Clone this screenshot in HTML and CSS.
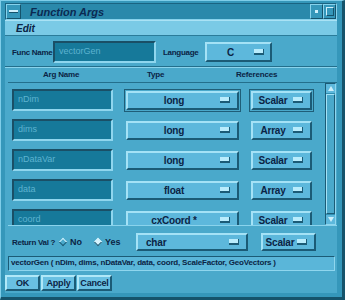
FILE: index.html
```html
<!DOCTYPE html>
<html lang="en">
<head>
    <meta charset="UTF-8">
    <title>Function Args</title>
    <link rel="stylesheet" href="styles.css">
</head>
<body>
    <div class="window">
        <div class="titlebar">
            <div class="tb-btn menu-btn"><span class="dash"></span></div>
            <div class="title">Function Args</div>
            <div class="tb-btn"><span class="dot"></span></div>
            <div class="tb-btn"><span class="square"></span></div>
        </div>
        <div class="menubar"><span class="menu-item">Edit</span></div>
        <div class="dialog">
            <div class="func-row">
                <span class="label func-label">Func Name</span>
                <div class="field func-field">vectorGen</div>
                <span class="label lang-label">Language</span>
                <div class="opt lang-opt"><span class="opt-text">C</span><span class="ind"></span></div>
            </div>
            <div class="sep"></div>
            <div class="headers">
                <span class="h-arg">Arg Name</span>
                <span class="h-type">Type</span>
                <span class="h-ref">References</span>
            </div>
            <div class="list">
                <div class="rows">
                    <div class="row focus">
                        <div class="field arg">nDim</div>
                        <div class="opt type"><span class="opt-text">long</span><span class="ind"></span></div>
                        <div class="opt ref"><span class="opt-text">Scalar</span><span class="ind"></span></div>
                    </div>
                    <div class="row">
                        <div class="field arg">dims</div>
                        <div class="opt type"><span class="opt-text">long</span><span class="ind"></span></div>
                        <div class="opt ref"><span class="opt-text">Array</span><span class="ind"></span></div>
                    </div>
                    <div class="row">
                        <div class="field arg">nDataVar</div>
                        <div class="opt type"><span class="opt-text">long</span><span class="ind"></span></div>
                        <div class="opt ref"><span class="opt-text">Scalar</span><span class="ind"></span></div>
                    </div>
                    <div class="row">
                        <div class="field arg">data</div>
                        <div class="opt type"><span class="opt-text">float</span><span class="ind"></span></div>
                        <div class="opt ref"><span class="opt-text">Array</span><span class="ind"></span></div>
                    </div>
                    <div class="row">
                        <div class="field arg">coord</div>
                        <div class="opt type"><span class="opt-text">cxCoord *</span><span class="ind"></span></div>
                        <div class="opt ref"><span class="opt-text">Scalar</span><span class="ind"></span></div>
                    </div>
                </div>
                <div class="scrollbar">
                    <div class="arrow up"></div>
                    <div class="slider"></div>
                    <div class="arrow down"></div>
                </div>
            </div>
            <div class="return-row">
                <span class="label ret-label">Return Val ?</span>
                <span class="radio"><span class="diamond"></span>No</span>
                <span class="radio"><span class="diamond on"></span>Yes</span>
                <div class="opt ret-type"><span class="opt-text left">char</span><span class="ind"></span></div>
                <div class="opt ret-ref"><span class="opt-text">Scalar</span><span class="ind"></span></div>
            </div>
            <div class="status">vectorGen ( nDim, dims, nDataVar, data, coord, ScaleFactor, GeoVectors )</div>
            <div class="actions">
                <div class="btn">OK</div>
                <div class="btn">Apply</div>
                <div class="btn">Cancel</div>
            </div>
        </div>
    </div>
</body>
</html>
```

FILE: styles.css
```css
* {
    box-sizing: border-box;
}

body {
    margin: 0;
    background-color: #1d6f8c;
    font-family: 'Liberation Sans', Arial, sans-serif;
    color: #0b2445;
}

.window {
    width: 345px;
    height: 300px;
    display: flex;
    flex-direction: column;
    background-color: #3597ba;
    border-top: 1px solid #7fcde8;
    border-left: 1px solid #7fcde8;
    border-right: 3px solid #15536b;
    border-bottom: 3px solid #15536b;
    padding: 2px 5px 4px 4px;
}

.titlebar {
    height: 17px;
    display: flex;
    align-items: center;
    background-color: #2a89ab;
    border: 1px solid #1a6482;
    border-right-color: #86d2ec;
    border-bottom-color: #86d2ec;
}

.tb-btn {
    width: 13px;
    height: 15px;
    display: flex;
    align-items: center;
    justify-content: center;
    background-color: #3597ba;
    border: 1px solid #86d2ec;
    border-right-color: #15536b;
    border-bottom-color: #15536b;
}

.menu-btn {
    width: 15px;
}

.dash {
    width: 9px;
    height: 3px;
    background-color: #cdeffb;
    border-bottom: 1px solid #15536b;
}

.dot {
    width: 3px;
    height: 3px;
    background-color: #cdeffb;
}

.square {
    width: 8px;
    height: 9px;
    border: 1px solid #cdeffb;
    border-right-color: #15536b;
    border-bottom-color: #15536b;
}

.title {
    flex: 1;
    padding-left: 9px;
    font-size: 11px;
    font-weight: bold;
    font-style: italic;
    color: #0a2a52;
}

.menubar {
    height: 16px;
    display: flex;
    align-items: center;
    background-color: #7acae6;
    border-top: 1px solid #a9e2f5;
    border-bottom: 1px solid #2b7c9a;
    padding-left: 11px;
}

.menu-item {
    font-size: 10px;
    font-weight: bold;
    font-style: italic;
}

.dialog {
    flex: 1;
    display: flex;
    flex-direction: column;
    background-color: #4aa9cb;
    padding: 5px 0 2px 3px;
}

.label {
    font-size: 8px;
    font-weight: bold;
    letter-spacing: -0.3px;
    white-space: nowrap;
}

.func-row {
    height: 22px;
    display: flex;
    align-items: center;
    padding-left: 4px;
}

.func-label {
    width: 41px;
}

.field {
    height: 22px;
    background-color: #16799a;
    border: 2px solid #1a4f66;
    border-right-color: #8fd6ee;
    border-bottom-color: #8fd6ee;
    font-size: 9px;
    color: #5db3d0;
    padding: 3px 0 0 4px;
}

.func-field {
    width: 103px;
}

.lang-label {
    width: 49px;
    padding-left: 7px;
}

.opt {
    height: 19px;
    display: flex;
    align-items: center;
    background-color: #5db8dc;
    border: 2px solid #a4e2f6;
    border-right-color: #1b5b76;
    border-bottom-color: #1b5b76;
    font-size: 10px;
    font-weight: bold;
    letter-spacing: -0.2px;
    padding-right: 7px;
}

.opt-text {
    flex: 1;
    text-align: center;
}

.opt-text.left {
    text-align: left;
    padding-left: 8px;
}

.ind {
    width: 10px;
    height: 6px;
    background-color: #b9ecfc;
    border-bottom: 2px solid #1b5b76;
    border-right: 1px solid #1b5b76;
}

.lang-opt {
    width: 67px;
    height: 20px;
    padding-right: 6px;
}

.lang-opt .opt-text {
    text-align: left;
    padding-left: 20px;
}

.sep {
    margin-top: 3px;
    margin-left: -3px;
    border-top: 1px solid #236f8c;
    border-bottom: 1px solid #8ad3ec;
}

.headers {
    height: 12px;
    display: flex;
    align-items: center;
    font-size: 8px;
    font-weight: bold;
    letter-spacing: -0.2px;
}

.h-arg {
    margin-left: 35px;
    width: 104px;
}

.h-type {
    width: 89px;
}

.h-ref {
    width: 60px;
}

.list {
    height: 144px;
    margin-top: 2px;
    display: flex;
    border-top: 1px solid #236f8c;
    border-bottom: 1px solid #8ad3ec;
}

.rows {
    flex: 1;
    overflow: hidden;
    display: flex;
    flex-direction: column;
    gap: 8px;
    padding: 6px 0 0 4px;
}

.row {
    height: 22px;
    flex-shrink: 0;
    display: flex;
    align-items: center;
}

.arg {
    width: 101px;
}

.type {
    width: 113px;
    margin-left: 13px;
}

.ref {
    width: 61px;
    margin-left: 12px;
}

.focus .type,
.focus .ref {
    outline: 1px solid #1f5e78;
    outline-offset: 1px;
}

.scrollbar {
    width: 11px;
    margin: 0 1px 0 4px;
    display: flex;
    flex-direction: column;
    background-color: #2f8fb2;
    border: 1px solid #1b5b76;
    border-right-color: #8fd6ee;
    border-bottom-color: #8fd6ee;
}

.arrow {
    height: 9px;
    background-color: #5db8dc;
    position: relative;
}

.arrow::after {
    content: '';
    position: absolute;
    left: 2px;
    width: 0;
    height: 0;
    border-left: 3px solid transparent;
    border-right: 3px solid transparent;
}

.arrow.up::after {
    top: 2px;
    border-bottom: 5px solid #cdeffb;
}

.arrow.down::after {
    top: 2px;
    border-top: 5px solid #cdeffb;
}

.slider {
    flex: 1;
    margin: 1px 0;
    background-color: #4aa9cb;
    border: 1px solid #a4e2f6;
    border-right-color: #1b5b76;
    border-bottom-color: #1b5b76;
}

.return-row {
    height: 18px;
    margin-top: 7px;
    display: flex;
    align-items: center;
    padding-left: 4px;
}

.ret-label {
    width: 48px;
}

.radio {
    display: flex;
    align-items: center;
    gap: 4px;
    font-size: 9px;
    font-weight: bold;
    width: 35px;
}

.diamond {
    width: 6px;
    height: 6px;
    transform: rotate(45deg);
    border: 1px solid #cdeffb;
    border-right-color: #1b5b76;
    border-bottom-color: #1b5b76;
}

.diamond.on {
    background-color: #d8f4fe;
}

.ret-type {
    width: 112px;
    height: 18px;
    margin-left: 6px;
}

.ret-ref {
    width: 55px;
    height: 18px;
    margin-left: 13px;
}

.status {
    height: 15px;
    margin-top: 5px;
    margin-right: 2px;
    padding: 1px 0 0 2px;
    background-color: #5ab6d9;
    border: 1px solid #1b5b76;
    border-right-color: #8fd6ee;
    border-bottom-color: #8fd6ee;
    font-size: 8px;
    font-weight: bold;
    letter-spacing: -0.2px;
    white-space: nowrap;
    overflow: hidden;
}

.actions {
    margin-top: 4px;
    margin-left: -3px;
    display: flex;
    gap: 1px;
}

.btn {
    height: 16px;
    width: 35px;
    display: flex;
    align-items: center;
    justify-content: center;
    background-color: #69c0e2;
    border: 2px solid #b0e8f8;
    border-right-color: #1b5b76;
    border-bottom-color: #1b5b76;
    font-size: 9px;
    font-weight: bold;
    letter-spacing: -0.2px;
}
```
